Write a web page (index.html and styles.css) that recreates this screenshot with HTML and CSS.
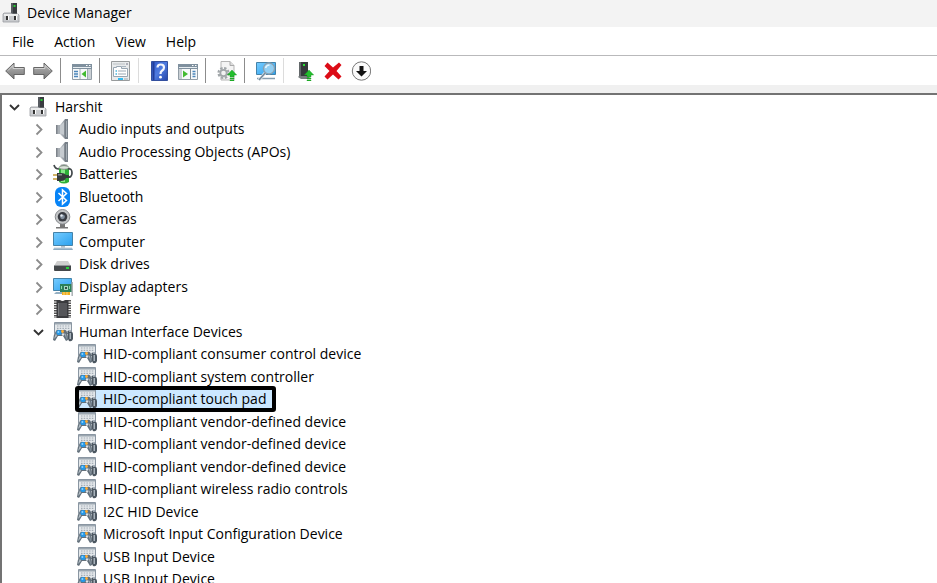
FILE: index.html
```html
<!DOCTYPE html>
<html lang="en">
<head>
<meta charset="utf-8">
<title>Device Manager</title>
<link rel="stylesheet" href="styles.css">
</head>
<body>
<svg class="sprite" aria-hidden="true">
  <defs>
    <linearGradient id="grey" x1="0" y1="0" x2="0" y2="1"><stop offset="0" stop-color="#b8b8b8"/><stop offset="1" stop-color="#777"/></linearGradient>
    <linearGradient id="screen" x1="0" y1="0" x2="1" y2="1"><stop offset="0" stop-color="#76ccff"/><stop offset="1" stop-color="#2aa0ee"/></linearGradient>
    <linearGradient id="metal" x1="0" y1="0" x2="1" y2="0"><stop offset="0" stop-color="#c5cacf"/><stop offset=".6" stop-color="#9aa1a8"/><stop offset="1" stop-color="#697078"/></linearGradient>
    <linearGradient id="help" x1="0" y1="0" x2="1" y2="1"><stop offset="0" stop-color="#3059c8"/><stop offset=".5" stop-color="#4f7be0"/><stop offset="1" stop-color="#2444a8"/></linearGradient>
  </defs>
  <symbol id="chev-down" viewBox="0 0 18 18"><path d="M5 7l4.500 4.500L14 7" fill="none" stroke="#333" stroke-width="1.900"/></symbol>
  <symbol id="chev-right" viewBox="0 0 18 18"><path d="M7.500 4.500l5 5-5 5" fill="none" stroke="#8c8c8c" stroke-width="1.800"/></symbol>
  <symbol id="pc" viewBox="0 0 20 20">
    <path d="M9 0h6v11H9z" fill="#393c40"/><path d="M9 0h2v11H9z" fill="#575b60"/><path d="M11.500 2h2v2h-2z" fill="#27cf32"/>
    <path d="M2 10h7l1 1h6l1 1v7H1v-8z" fill="#c8cacd" stroke="#9b9da1" stroke-width=".8"/><path d="M2 11h14v2H2z" fill="#eceded"/>
    <path d="M4 13h2v4H4zM12 13h2v4h-2z" fill="#333"/><path d="M6 13h1v4H6zM14 13h1v4h-1z" fill="#fff"/>
  </symbol>
  <symbol id="speaker" viewBox="0 0 20 20">
    <path d="M3 6h4v9H3z" fill="#a9afb5"/><path d="M3 6h1.500v9H3z" fill="#7e848b"/><path d="M7 6l5-6h1v20h-1l-5-5z" fill="url(#metal)"/><path d="M7 7l4-4v13l-4-2z" fill="#c6cbd0"/>
    <path d="M12.500 0H15v20h-2.500z" fill="#78818a"/><path d="M13 2h1v16h-1z" fill="#a5adb4"/>
  </symbol>
  <symbol id="battery" viewBox="0 0 20 20">
    <ellipse cx="11" cy="1.500" rx="3.500" ry="1.500" fill="#a9adaf"/><path d="M6 3q5-3 10 0v15q-5 3-10 0z" fill="#2dad38"/><path d="M8 4h4v14H8z" fill="#84e986"/>
    <ellipse cx="11" cy="3.500" rx="5" ry="1.800" fill="#dbe3db" stroke="#777" stroke-width=".7"/>
    <path d="M1 1q1 4 5 4M14 13q5 1 5-4t-4-4" fill="none" stroke="#42484b" stroke-width="1.700"/>
    <path d="M4 9h4q4 0 5 2h3v3h-3q-1 3-5 3H4z" fill="#353a3c"/><path d="M5 10h4v1.500H5z" fill="#84898b"/><path d="M0 11h4M0 15h4" stroke="#c49a36" stroke-width="1.600"/>
  </symbol>
  <symbol id="bluetooth" viewBox="0 0 20 20"><rect x="2" y="0" width="15" height="20" rx="6" fill="#0784f7"/><path d="M5.500 6l8 7.500-4 3.500V3l4 3.500-8 7.500" fill="none" stroke="#fff" stroke-width="1.500"/></symbol>
  <symbol id="camera" viewBox="0 0 20 20"><path d="M7 15h5v3h3v1.500H3V18h4z" fill="#777"/><circle cx="9.500" cy="7.800" r="7.300" fill="#c2c4c6" stroke="#888b8f"/><circle cx="9.500" cy="7.800" r="4.800" fill="#383b42"/><circle cx="9.500" cy="7.800" r="2.400" fill="#83909f"/><circle cx="8.500" cy="6.500" r="1.200" fill="#e5ebf2"/></symbol>
  <symbol id="monitor" viewBox="0 0 20 20"><path d="M.5.500h19v13H.5z" fill="url(#screen)" stroke="#4583a9"/><path d="M8 14h4v2H8z" fill="#b8c0c7"/><path d="M1 16h18l1 2H0z" fill="#8eabc0"/><path d="M1 16h18" stroke="#c4d4df"/></symbol>
  <symbol id="disk" viewBox="0 0 20 20"><path d="M4 7h11l3 5H1z" fill="#cfcfcf"/><path d="M1 11h17v5q0 1-1 1H2q-1 0-1-1z" fill="#44484b"/><path d="M1 11h17v1H1z" fill="#919598"/><path d="M13 13h3v2h-3z" fill="#28d43a"/></symbol>
  <symbol id="display" viewBox="0 0 20 20"><path d="M.5 1.500h18v12H.5z" fill="url(#screen)" stroke="#4583a9"/><path d="M3 15h7l-1 2H1z" fill="#95b0c3"/><path d="M7 7h12v8H7z" fill="#2c8058"/><path d="M19.200 5v14" stroke="#aab0b4" stroke-width="1.500"/><path d="M11 9h4v4h-4z" fill="#a5d7be"/><path d="M12 10h2v2h-2z" fill="#314e43"/><path d="M8 9h1v3H8zM16 9h1v3h-1z" fill="#8dd7a7"/><path d="M9 15h8v3H9z" fill="#efae20"/><path d="M11 15v3M14 15v3" stroke="#fff1bd" stroke-width=".6"/></symbol>
  <symbol id="chip" viewBox="0 0 20 20"><path d="M2.500 1v18M16.500 1v18" stroke="#555" stroke-width="3" stroke-dasharray="1.500 1"/><path d="M3.500 1H7q2.500 2 5 0h3.500v18h-12z" fill="#3a3b3e"/><path d="M5 4h9v13H5z" fill="#55565a"/><path d="M5.500 4v13" stroke="#77797c"/></symbol>
  <symbol id="hid" viewBox="0 0 20 20">
    <path d="M1.500.500h17v11h-17z" fill="#e3e7ea" stroke="#8a96a2"/><path d="M2 1h16v1.500H2z" fill="#9ba6b0"/><path d="M4 4h12.500M4 6.300h12.500" stroke="#a3acb5" stroke-width="1.200" stroke-dasharray="1.500 1.200"/><path d="M15 8h3v3h-3z" fill="#a6afb8"/>
    <path d="M3 9q1-2 3-1h4q3-1 4 2 1 3 1 8l-2 1-3-5H5l-3 5-2-1q0-5 3-9z" fill="#63707b"/><path d="M3 11l-2 6 3-3z" fill="#b4bec6"/><path d="M11 11l2 1 1 6z" fill="#9ba6b0"/>
    <circle cx="6" cy="10.500" r="2.600" fill="#2698e6"/><circle cx="5.400" cy="10" r="1" fill="#8ed2ff"/><circle cx="9.500" cy="9.500" r="1.400" fill="#ffad35"/><circle cx="10" cy="12.500" r="1.200" fill="#dce1e5"/>
    <path d="M14.500 9h1.500v3h-1.500zM15 11l1-1q4-1 4 2v5q-1 3-4 2l-1-2z" fill="#4c5761"/><path d="M17.200 11v6" stroke="#c1cbd3" stroke-width="1.200"/>
  </symbol>
  <symbol id="back" viewBox="0 0 20 20"><path d="M.7 10L9 2v4.500h10.300v7H9V18z" fill="url(#grey)" stroke="#666"/><path d="M3 9.500l5-5v3h10.500" fill="none" stroke="#d0d0d0"/></symbol>
  <symbol id="forward" viewBox="0 0 20 20"><path d="M19.300 10L11 2v4.500H.7v7H11V18z" fill="url(#grey)" stroke="#666"/><path d="M17 9l-5-4.500v3H1.500" fill="none" stroke="#d0d0d0"/></symbol>
  <symbol id="tree-pane" viewBox="0 0 20 20"><path d="M.5 3.500h19v15H.5z" fill="#f7f9fa" stroke="#929da6"/><path d="M0 3h20v5H0z" fill="#7f909e"/><path d="M1 6.500h18" stroke="#e6ecf0"/><path d="M14 4.500h1.500M17 4.500h1.500" stroke="#fff"/><path d="M2 10.500h4M2 13h4M2 15.500h4" stroke="#4c86ba" stroke-width="1.300"/><path d="M8 8v10M15.500 8v10" stroke="#9eabb4"/><path d="M14 9.500v7L9.500 13z" fill="#42ba30"/><path d="M16 8h3v10h-3z" fill="#cad0d5"/></symbol>
  <symbol id="action-pane" viewBox="0 0 20 20"><path d="M.5 3.500h19v15H.5z" fill="#f7f9fa" stroke="#929da6"/><path d="M0 3h20v5H0z" fill="#7f909e"/><path d="M1 6.500h18" stroke="#e6ecf0"/><path d="M14 4.500h1.500M17 4.500h1.500" stroke="#fff"/><path d="M1 8h3v10H1z" fill="#cad0d5"/><path d="M5 9.500v7l5-3.500z" fill="#42ba30"/><path d="M12.500 8v10" stroke="#7f8b94"/><path d="M14.500 10.500h3M14.500 13h3M14.500 15.500h3" stroke="#4c86ba" stroke-width="1.300"/></symbol>
  <symbol id="props" viewBox="0 0 20 20"><path d="M.5.500h18v19H.5z" fill="#e9ebec" stroke="#989b9c"/><path d="M2 3h12" stroke="#bac0c4"/><path d="M15 3h2" stroke="#778"/><path d="M2.500 6.500h3v-1h5v2h6v8h-14z" fill="#fff" stroke="#98a6b2"/><path d="M11 5.500h4" stroke="#a9b5bf"/><path d="M4.500 10H6M4.500 13H6" stroke="#4bb5dd" stroke-width="1.300"/><path d="M7 10h8M7 13h8" stroke="#99a7b3" stroke-width="1.200"/><path d="M7 17h5v2H7z" fill="#31baf0"/><path d="M13 17h4v2h-4z" fill="#c3cacf"/></symbol>
  <symbol id="question" viewBox="0 0 20 20"><path d="M1.500.500h16v19h-16z" fill="url(#help)" stroke="#334f9e"/><path d="M3.500 1v18" stroke="#233e9b" stroke-width="2"/><path d="M7.500 6.500q0-3 3.300-3 3.200 0 3.200 3 0 2-2 3.200Q10.500 11 10.500 13" fill="none" stroke="#f3f5fc" stroke-width="2.200"/><circle cx="10.500" cy="16.200" r="1.400" fill="#fff"/></symbol>
  <symbol id="up" viewBox="0 0 10 11"><path d="M5 0l4.700 5H7v2H3V5H.3zM3 8h4v1H3zM3 10h4v1H3z" fill="#24bd2e" stroke="#148f1d" stroke-width=".4"/></symbol>
  <symbol id="scan" viewBox="0 0 20 20"><path d="M4 .5h9l4 4V19H4z" fill="#f4f4f4" stroke="#b5b5b5"/><path d="M13 .5v4h4" fill="#ddd" stroke="#aaa"/><circle cx="6.500" cy="12" r="5" fill="none" stroke="#a1a6a9" stroke-width="2.200" stroke-dasharray="2.400 1.530"/><circle cx="6.500" cy="12" r="3.200" fill="#f2f2f2" stroke="#a1a6a9" stroke-width="1.800"/><use href="#up" x="10" y="9" width="10" height="11"/></symbol>
  <symbol id="search-pc" viewBox="0 0 20 20"><path d="M.5 1.500h19v12H.5z" fill="url(#screen)" stroke="#4583a9"/><path d="M1 17.500h18" stroke="#879eaf" stroke-width="1.500"/><path d="M10 11l-7 8" stroke="#e8edf1" stroke-width="3"/><path d="M10 11l-7 8" stroke="#758b9c" stroke-width="1.700"/><circle cx="13" cy="7.500" r="5.500" fill="#91cff3" stroke="#8ca0af" stroke-width="1.300"/><path d="M9.500 7q1-3 4-3" fill="none" stroke="#e4f5ff" stroke-width="1.600"/></symbol>
  <symbol id="update" viewBox="0 0 20 20"><path d="M4 1h9v15H4z" fill="#35393b"/><path d="M4 1h2v15H4z" fill="#63686a"/><path d="M4 15h9l3 3H6l-3-2z" fill="#777c7e"/><path d="M8 3h2v2H8z" fill="#29e234"/><use href="#up" x="9" y="9" width="10" height="11"/></symbol>
  <symbol id="remove" viewBox="0 0 20 20"><path d="M4.500 1.500L10 6.500l6-5 2.500 2.500-5 6 5 5.500-3 3-5.500-5-5.500 5-3-3 5-5.500-5-5z" fill="#dc0c17"/></symbol>
  <symbol id="disable" viewBox="0 0 20 20"><circle cx="10.500" cy="10" r="9.200" fill="#fafafa" stroke="#777"/><path d="M8.500 5h4v5H16l-5.500 5.500L5 10h3.500z" fill="#111"/></symbol>
</svg>

<header class="titlebar"><svg class="icon"><use href="#pc"/></svg><h1 class="title">Device Manager</h1></header>
<nav class="menubar" aria-label="Menu">
  <button class="menu">File</button><button class="menu">Action</button><button class="menu">View</button><button class="menu">Help</button>
</nav>
<div class="toolbar" role="toolbar" aria-label="Tools">
  <button class="tool" aria-label="Back"><svg class="icon"><use href="#back"/></svg></button>
  <button class="tool" aria-label="Forward"><svg class="icon"><use href="#forward"/></svg></button>
  <span class="sep"></span>
  <button class="tool" aria-label="Show console tree"><svg class="icon"><use href="#tree-pane"/></svg></button>
  <span class="sep"></span>
  <button class="tool" aria-label="Properties"><svg class="icon"><use href="#props"/></svg></button>
  <span class="sep light"></span>
  <button class="tool" aria-label="Help topics"><svg class="icon"><use href="#question"/></svg></button>
  <button class="tool" aria-label="Show action pane"><svg class="icon"><use href="#action-pane"/></svg></button>
  <span class="sep"></span>
  <button class="tool" aria-label="Update driver"><svg class="icon"><use href="#scan"/></svg></button>
  <span class="sep"></span>
  <button class="tool" aria-label="Scan for hardware changes"><svg class="icon"><use href="#search-pc"/></svg></button>
  <span class="sep light"></span>
  <button class="tool" aria-label="Update device"><svg class="icon"><use href="#update"/></svg></button>
  <button class="tool" aria-label="Uninstall device"><svg class="icon"><use href="#remove"/></svg></button>
  <button class="tool" aria-label="Disable device"><svg class="icon"><use href="#disable"/></svg></button>
</div>
<main class="content">
<ul class="tree" role="tree" aria-label="Devices">
  <li class="row" role="treeitem" aria-level="1" aria-expanded="true"><svg class="chevron"><use href="#chev-down"/></svg><span class="node"><svg class="icon"><use href="#pc"/></svg>Harshit</span></li>
  <li class="row category" role="treeitem" aria-level="2" aria-expanded="false"><svg class="chevron"><use href="#chev-right"/></svg><span class="node"><svg class="icon"><use href="#speaker"/></svg>Audio inputs and outputs</span></li>
  <li class="row category" role="treeitem" aria-level="2" aria-expanded="false"><svg class="chevron"><use href="#chev-right"/></svg><span class="node"><svg class="icon"><use href="#speaker"/></svg>Audio Processing Objects (APOs)</span></li>
  <li class="row category" role="treeitem" aria-level="2" aria-expanded="false"><svg class="chevron"><use href="#chev-right"/></svg><span class="node"><svg class="icon"><use href="#battery"/></svg>Batteries</span></li>
  <li class="row category" role="treeitem" aria-level="2" aria-expanded="false"><svg class="chevron"><use href="#chev-right"/></svg><span class="node"><svg class="icon"><use href="#bluetooth"/></svg>Bluetooth</span></li>
  <li class="row category" role="treeitem" aria-level="2" aria-expanded="false"><svg class="chevron"><use href="#chev-right"/></svg><span class="node"><svg class="icon"><use href="#camera"/></svg>Cameras</span></li>
  <li class="row category" role="treeitem" aria-level="2" aria-expanded="false"><svg class="chevron"><use href="#chev-right"/></svg><span class="node"><svg class="icon"><use href="#monitor"/></svg>Computer</span></li>
  <li class="row category" role="treeitem" aria-level="2" aria-expanded="false"><svg class="chevron"><use href="#chev-right"/></svg><span class="node"><svg class="icon"><use href="#disk"/></svg>Disk drives</span></li>
  <li class="row category" role="treeitem" aria-level="2" aria-expanded="false"><svg class="chevron"><use href="#chev-right"/></svg><span class="node"><svg class="icon"><use href="#display"/></svg>Display adapters</span></li>
  <li class="row category" role="treeitem" aria-level="2" aria-expanded="false"><svg class="chevron"><use href="#chev-right"/></svg><span class="node"><svg class="icon"><use href="#chip"/></svg>Firmware</span></li>
  <li class="row category" role="treeitem" aria-level="2" aria-expanded="true"><svg class="chevron"><use href="#chev-down"/></svg><span class="node"><svg class="icon"><use href="#hid"/></svg>Human Interface Devices</span></li>
  <li class="row device" role="treeitem" aria-level="3"><span class="node"><svg class="icon"><use href="#hid"/></svg>HID-compliant consumer control device</span></li>
  <li class="row device" role="treeitem" aria-level="3"><span class="node"><svg class="icon"><use href="#hid"/></svg>HID-compliant system controller</span></li>
  <li class="row device" role="treeitem" aria-level="3" aria-selected="true"><span class="node selected"><svg class="icon"><use href="#hid"/></svg>HID-compliant touch pad</span></li>
  <li class="row device" role="treeitem" aria-level="3"><span class="node"><svg class="icon"><use href="#hid"/></svg>HID-compliant vendor-defined device</span></li>
  <li class="row device" role="treeitem" aria-level="3"><span class="node"><svg class="icon"><use href="#hid"/></svg>HID-compliant vendor-defined device</span></li>
  <li class="row device" role="treeitem" aria-level="3"><span class="node"><svg class="icon"><use href="#hid"/></svg>HID-compliant vendor-defined device</span></li>
  <li class="row device" role="treeitem" aria-level="3"><span class="node"><svg class="icon"><use href="#hid"/></svg>HID-compliant wireless radio controls</span></li>
  <li class="row device" role="treeitem" aria-level="3"><span class="node"><svg class="icon"><use href="#hid"/></svg>I2C HID Device</span></li>
  <li class="row device" role="treeitem" aria-level="3"><span class="node"><svg class="icon"><use href="#hid"/></svg>Microsoft Input Configuration Device</span></li>
  <li class="row device" role="treeitem" aria-level="3"><span class="node"><svg class="icon"><use href="#hid"/></svg>USB Input Device</span></li>
  <li class="row device" role="treeitem" aria-level="3"><span class="node"><svg class="icon"><use href="#hid"/></svg>USB Input Device</span></li>
</ul>
</main>
</body>
</html>
```
FILE: styles.css
```css
* { box-sizing: border-box; }

body {
  margin: 0;
  height: 100vh;
  overflow: hidden;
  display: flex;
  flex-direction: column;
  background: #f0f0f0;
  color: #000;
  font: 14px/20px "Open Sans", "Noto Sans", sans-serif;
}

button {
  border: 0;
  padding: 0;
  background: none;
  color: inherit;
  font: inherit;
}

.sprite { position: absolute; width: 0; height: 0; }

.icon { width: 20px; height: 20px; flex: none; }

.titlebar {
  display: flex;
  align-items: center;
  gap: 5px;
  flex: none;
  height: 27px;
  padding: 0 2px 2px;
  background: #f3f3f3;
}

.title { margin: 0; font-size: 14px; font-weight: 400; }

.menubar {
  display: flex;
  gap: 20px;
  flex: none;
  height: 29px;
  padding: 2px 12px 0;
  background: #fff;
  border-bottom: 1px solid #b9b9bb;
}

.toolbar {
  display: flex;
  align-items: center;
  flex: none;
  height: 29px;
  padding-left: 1px;
  background: #fff;
}

.tool {
  display: flex;
  justify-content: center;
  width: 28px;
  flex: none;
}

.sep {
  width: 1px;
  height: 25px;
  margin: 0 7px 0 3px;
  background: #8c8c8c;
}

.light { background: #dcdcdc; }

.content {
  flex: 1;
  min-height: 0;
  margin-top: 8px;
  overflow: hidden;
  background: #fff;
  border: solid #737373;
  border-width: 2px 0 0 2px;
}

.tree {
  display: grid;
  grid-auto-rows: 23px 22px;
  margin: 0;
  padding: 0 0 0 3px;
  list-style: none;
}

.row { display: flex; align-items: center; gap: 6px; white-space: nowrap; }
.category { padding-left: 24px; }
.device { padding-left: 72px; }

.chevron { width: 18px; height: 18px; flex: none; }

.node { position: relative; display: flex; align-items: center; gap: 6px; }

.selected {
  padding-right: 6px;
  background: #cce8ff;
}

.selected::after {
  content: "";
  position: absolute;
  inset: -3px -4px -3px -2px;
  border: 4px solid #000;
  border-radius: 3px;
}
```
